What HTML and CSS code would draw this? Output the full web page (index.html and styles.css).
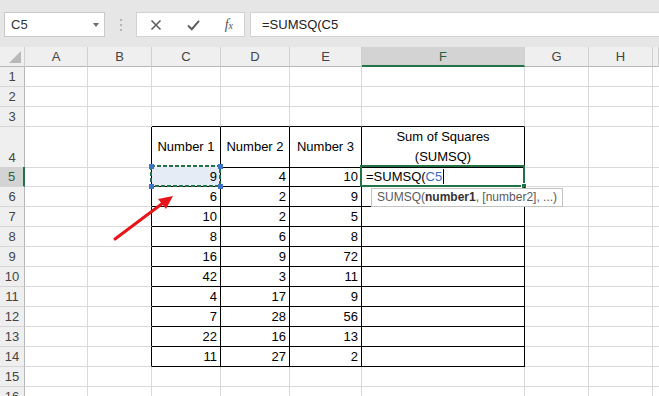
FILE: index.html
```html
<!DOCTYPE html>
<html>
<head>
    <title>SUMSQ - Excel</title>
    <link rel="stylesheet" href="styles.css">
</head>
<body>
    <div class="toolbar">
        <div class="namebox">
            <span>C5</span>
            <span class="drop"></span>
        </div>
        <div class="grip"><i></i><i></i><i></i></div>
        <div class="buttons">
            <svg class="ico" width="12" height="12" viewBox="0 0 12 12"><path d="M1.5 1.5 L10.5 10.5 M10.5 1.5 L1.5 10.5" stroke="#5f5f5f" stroke-width="1.6" fill="none"/></svg>
            <svg class="ico" width="13" height="12" viewBox="0 0 13 12"><path d="M1 6.5 L4.8 10.2 L12 1.8" stroke="#5f5f5f" stroke-width="2" fill="none"/></svg>
            <span class="fx">f<small>x</small></span>
        </div>
        <div class="formula">=SUMSQ(C5</div>
    </div>

    <div class="sheet">
        <div class="row hdr">
            <div class="corner"></div>
            <div class="ch">A</div><div class="ch">B</div><div class="ch">C</div><div class="ch">D</div><div class="ch">E</div><div class="ch sel">F</div><div class="ch">G</div><div class="ch">H</div><div class="ch"></div>
        </div>
        <div class="row">
            <div class="rh">1</div>
            <div class="c"></div><div class="c"></div><div class="c"></div><div class="c"></div><div class="c"></div><div class="c"></div><div class="c"></div><div class="c"></div><div class="c"></div>
        </div>
        <div class="row">
            <div class="rh">2</div>
            <div class="c"></div><div class="c"></div><div class="c"></div><div class="c"></div><div class="c"></div><div class="c"></div><div class="c"></div><div class="c"></div><div class="c"></div>
        </div>
        <div class="row">
            <div class="rh">3</div>
            <div class="c"></div><div class="c"></div><div class="c bt"></div><div class="c bt"></div><div class="c bt"></div><div class="c bt"></div><div class="c"></div><div class="c"></div><div class="c"></div>
        </div>
        <div class="row tall">
            <div class="rh">4</div>
            <div class="c"></div><div class="c bl"></div>
            <div class="c tb head">Number 1</div>
            <div class="c tb head">Number 2</div>
            <div class="c tb head">Number 3</div>
            <div class="c tb head">Sum of Squares<br>(SUMSQ)</div>
            <div class="c"></div><div class="c"></div><div class="c"></div>
        </div>
        <div class="row">
            <div class="rh sel">5</div>
            <div class="c"></div><div class="c bl"></div>
            <div class="c tb n picked">9
                <svg class="ants" width="73" height="24" viewBox="0 0 73 24"><rect x="2" y="2" width="69" height="20" fill="none" stroke="#217346" stroke-width="2" stroke-dasharray="4 2"/></svg>
                <i class="hd tl"></i><i class="hd tr"></i><i class="hd bl2"></i><i class="hd br"></i>
            </div>
            <div class="c tb n">4</div>
            <div class="c tb n">10</div>
            <div class="c tb active">=SUMSQ(<span class="ref">C5</span><span class="caret"></span>
                <span class="frame"></span><span class="fill"></span>
            </div>
            <div class="c"></div><div class="c"></div><div class="c"></div>
        </div>
        <div class="row">
            <div class="rh">6</div>
            <div class="c"></div><div class="c bl"></div>
            <div class="c tb n">6</div><div class="c tb n">2</div><div class="c tb n">9</div>
            <div class="c tb tipcell">
                <div class="tip">SUMSQ(<b>number1</b>, [number2], ...)</div>
            </div>
            <div class="c"></div><div class="c"></div><div class="c"></div>
        </div>
        <div class="row">
            <div class="rh">7</div>
            <div class="c"></div><div class="c bl"></div>
            <div class="c tb n">10</div><div class="c tb n">2</div><div class="c tb n">5</div><div class="c tb"></div>
            <div class="c"></div><div class="c"></div><div class="c"></div>
        </div>
        <div class="row">
            <div class="rh">8</div>
            <div class="c"></div><div class="c bl"></div>
            <div class="c tb n">8</div><div class="c tb n">6</div><div class="c tb n">8</div><div class="c tb"></div>
            <div class="c"></div><div class="c"></div><div class="c"></div>
        </div>
        <div class="row">
            <div class="rh">9</div>
            <div class="c"></div><div class="c bl"></div>
            <div class="c tb n">16</div><div class="c tb n">9</div><div class="c tb n">72</div><div class="c tb"></div>
            <div class="c"></div><div class="c"></div><div class="c"></div>
        </div>
        <div class="row">
            <div class="rh">10</div>
            <div class="c"></div><div class="c bl"></div>
            <div class="c tb n">42</div><div class="c tb n">3</div><div class="c tb n">11</div><div class="c tb"></div>
            <div class="c"></div><div class="c"></div><div class="c"></div>
        </div>
        <div class="row">
            <div class="rh">11</div>
            <div class="c"></div><div class="c bl"></div>
            <div class="c tb n">4</div><div class="c tb n">17</div><div class="c tb n">9</div><div class="c tb"></div>
            <div class="c"></div><div class="c"></div><div class="c"></div>
        </div>
        <div class="row">
            <div class="rh">12</div>
            <div class="c"></div><div class="c bl"></div>
            <div class="c tb n">7</div><div class="c tb n">28</div><div class="c tb n">56</div><div class="c tb"></div>
            <div class="c"></div><div class="c"></div><div class="c"></div>
        </div>
        <div class="row">
            <div class="rh">13</div>
            <div class="c"></div><div class="c bl"></div>
            <div class="c tb n">22</div><div class="c tb n">16</div><div class="c tb n">13</div><div class="c tb"></div>
            <div class="c"></div><div class="c"></div><div class="c"></div>
        </div>
        <div class="row">
            <div class="rh">14</div>
            <div class="c"></div><div class="c bl"></div>
            <div class="c tb n">11</div><div class="c tb n">27</div><div class="c tb n">2</div><div class="c tb"></div>
            <div class="c"></div><div class="c"></div><div class="c"></div>
        </div>
        <div class="row">
            <div class="rh">15</div>
            <div class="c"></div><div class="c"></div><div class="c"></div><div class="c"></div><div class="c"></div><div class="c"></div><div class="c"></div><div class="c"></div><div class="c"></div>
        </div>
        <div class="row">
            <div class="rh">16</div>
            <div class="c"></div><div class="c"></div><div class="c"></div><div class="c"></div><div class="c"></div><div class="c"></div><div class="c"></div><div class="c"></div><div class="c"></div>
        </div>

        <!-- red arrow pointing at the selected range -->
        <svg class="arrow" width="659" height="349" viewBox="0 0 659 349">
            <line x1="115" y1="192" x2="163" y2="156" stroke="#e8141b" stroke-width="3" stroke-linecap="round"/>
            <polygon points="173,149 158,152 166,162" fill="#e8141b"/>
        </svg>
    </div>
</body>
</html>
```

FILE: styles.css
```css
* {
    box-sizing: border-box;
}
html, body {
    margin: 0;
    overflow: hidden;
}
body {
    width: 659px;
    height: 396px;
    font-family: "Liberation Sans", Arial, sans-serif;
    font-size: 13px;
    color: #000;
    background: #fff;
}

/* formula bar */
.toolbar {
    height: 47px;
    background: #e6e6e6;
    display: flex;
    align-items: flex-start;
    padding-top: 12px;
}
.namebox {
    margin-left: 4px;
    width: 101px;
    height: 25px;
    background: #fff;
    border: 1px solid #c9c9c9;
    display: flex;
    align-items: center;
    justify-content: space-between;
    padding: 0 5px 0 6px;
    color: #333;
}
.drop {
    width: 0;
    height: 0;
    border-left: 3.5px solid transparent;
    border-right: 3.5px solid transparent;
    border-top: 4px solid #6b6b6b;
}
.grip {
    width: 31px;
    height: 25px;
    display: flex;
    flex-direction: column;
    align-items: center;
    justify-content: center;
    gap: 3px;
}
.grip i {
    width: 2px;
    height: 2px;
    background: #b4b4b4;
}
.buttons {
    width: 109px;
    height: 25px;
    background: #fff;
    border: 1px solid #d2d2d2;
    display: flex;
    align-items: center;
    justify-content: space-between;
    padding: 0 11px 0 13px;
}
.fx {
    font-family: "Liberation Serif", "Times New Roman", serif;
    font-style: italic;
    font-size: 14px;
    color: #555;
}
.fx small {
    font-size: 10px;
}
.formula {
    flex: 1;
    margin-left: 5px;
    height: 25px;
    background: #fff;
    border: 1px solid #d2d2d2;
    border-right: none;
    display: flex;
    align-items: center;
    padding-left: 11px;
    color: #222;
}

/* grid */
.sheet {
    position: relative;
}
.row {
    display: grid;
    grid-template-columns: 25px 63px 64px 69px 69px 72px 163px 64px 64px 6px;
    height: 20px;
}
.row.tall {
    height: 40px;
}
.c {
    border-right: 1px solid #d9d9d9;
    border-bottom: 1px solid #d9d9d9;
    display: flex;
    align-items: flex-end;
    padding: 0 3px 1px;
    line-height: 17px;
    white-space: nowrap;
}
.c.tb {
    border-right-color: #000;
    border-bottom-color: #000;
}
.c.bl {
    border-right-color: #000;
}
.c.bt {
    border-bottom-color: #000;
}
.c.n {
    justify-content: flex-end;
}
.c.head {
    justify-content: center;
    align-items: center;
    text-align: center;
    line-height: 20px;
    padding: 0 2px;
}

/* headers */
.hdr .ch, .corner {
    background: #efefef;
    border-right: 1px solid #d0d0d0;
    border-bottom: 1px solid #b8b8b8;
    display: flex;
    align-items: center;
    justify-content: center;
    color: #444;
}
.corner {
    position: relative;
}
.corner::after {
    content: "";
    position: absolute;
    right: 3px;
    bottom: 3px;
    border-left: 12px solid transparent;
    border-bottom: 12px solid #b9b9b9;
}
.hdr .ch.sel {
    background: #d3d3d3;
    border-bottom: 2px solid #217346;
    color: #2b5f3e;
}
.rh {
    background: #efefef;
    border-right: 1px solid #b8b8b8;
    border-bottom: 1px solid #d6d6d6;
    display: flex;
    align-items: flex-end;
    justify-content: center;
    line-height: 18px;
    color: #444;
}
.rh.sel {
    background: #d3d3d3;
    border-right: 2px solid #217346;
    color: #2b5f3e;
}

/* copied / referenced range C5 */
.picked {
    position: relative;
    background: #e6ecf6;
}
.ants {
    position: absolute;
    left: -3px;
    top: -3px;
}
.hd {
    position: absolute;
    width: 5px;
    height: 5px;
    background: #3f73c7;
}
.hd.tl { left: -3px; top: -3px; }
.hd.tr { right: -3px; top: -3px; }
.hd.bl2 { left: -3px; bottom: -3px; }
.hd.br { right: -3px; bottom: -3px; }

/* active cell F5 */
.active {
    position: relative;
    padding-left: 4px;
}
.ref {
    color: #3a6cc0;
}
.caret {
    display: inline-block;
    width: 1px;
    height: 15px;
    background: #000;
    margin-left: 1px;
    margin-bottom: 1px;
}
.frame {
    position: absolute;
    left: -2px;
    top: -2px;
    right: -1px;
    bottom: -1px;
    border: 2px solid #217346;
}
.fill {
    position: absolute;
    right: -3px;
    bottom: -3px;
    width: 6px;
    height: 6px;
    background: #217346;
    border: 1px solid #fff;
}

/* function tooltip */
.tipcell {
    position: relative;
}
.tip {
    position: absolute;
    left: 9px;
    top: 1px;
    height: 19px;
    padding: 0 5px;
    background: #fff;
    border: 1px solid #c2c2c2;
    color: #5a5a5a;
    font-size: 12px;
    line-height: 17px;
    z-index: 2;
}
.tip b {
    color: #333;
}

.arrow {
    position: absolute;
    left: 0;
    top: 0;
    pointer-events: none;
    z-index: 3;
}
```
